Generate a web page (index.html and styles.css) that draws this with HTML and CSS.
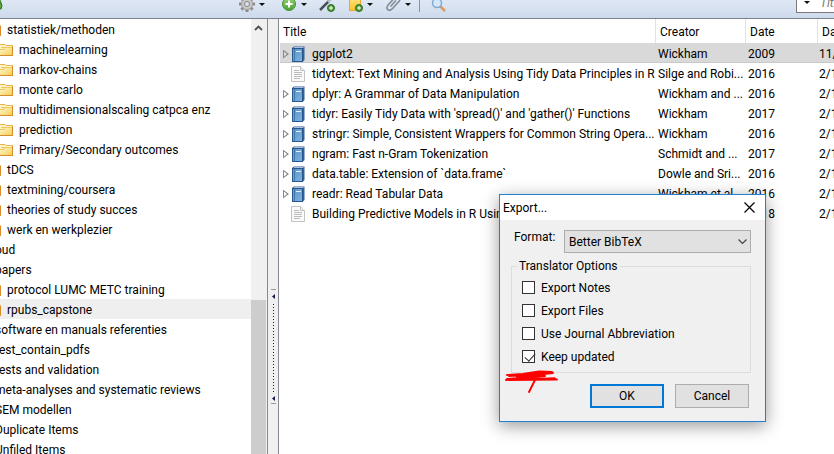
FILE: index.html
```html
<!DOCTYPE html>
<html lang="en">
<head>
<meta charset="utf-8">
<title>Library</title>
<link rel="stylesheet" href="styles.css">
</head>
<body>
<svg class="defs" aria-hidden="true">
  <defs>
    <linearGradient id="gFolder" x1="0" y1="0" x2="1" y2="1"><stop offset="0" stop-color="#fffbe0"/><stop offset="1" stop-color="#f5cd45"/></linearGradient>
    <linearGradient id="gBook" x1="0" y1="0" x2="1" y2="1"><stop offset="0" stop-color="#5f93c6"/><stop offset="1" stop-color="#7db4dd"/></linearGradient>
    <linearGradient id="gGreen" x1="0" y1="0" x2="0" y2="1"><stop offset="0" stop-color="#9ad27e"/><stop offset="1" stop-color="#45a32e"/></linearGradient>
    <linearGradient id="gNote" x1="0" y1="0" x2="0" y2="1"><stop offset="0" stop-color="#ffe680"/><stop offset="1" stop-color="#fbc02f"/></linearGradient>
    <symbol id="folder" viewBox="0 0 16 16">
      <path d="M2.5 13.500V2.500H8l1 1h6.500V13.500Z" fill="#fff6c4" stroke="#e9b050"/>
      <path d="M1.500 13.500V7.500H7l1-2h7.500V13.500Z" fill="url(#gFolder)" stroke="#f0c766"/>
      <path d="M1 13.500H15.500V4" fill="none" stroke="#d98b2b"/>
      <path d="M4 5.500H8M4 7.500H6" stroke="#efc55c"/>
    </symbol>
    <symbol id="book" viewBox="0 0 16 16">
      <path d="M2 2 4 0.500H14.500V14L13 15.500H2Z" fill="#33619b"/>
      <path d="M4 1.500H13.500" stroke="#a9bfdd"/>
      <rect x="2.500" y="2.500" width="10" height="13" fill="url(#gBook)" stroke="#28578f"/>
      <path d="M4.500 3V15" stroke="#3f78b3"/>
      <path d="M6 5.500H11" stroke="#e4f0fa"/>
    </symbol>
    <symbol id="page" viewBox="0 0 16 16">
      <path d="M1.500 .500H10.500L14.500 4.500V15.500H1.500Z" fill="#fafafa" stroke="#c3c3c3"/>
      <path d="M10.500 .500V4.500H14.500" fill="#eee" stroke="#c3c3c3"/>
      <path d="M4 4.500H9M4 6.500H12M4 8.500H12M4 10.500H12M4 12.500H10" stroke="#bcbcbc"/>
    </symbol>
    <symbol id="plus" viewBox="0 0 8 8">
      <circle cx="4" cy="4" r="3.500" fill="#4c9a32" stroke="#2f6d1f"/>
      <path d="M4 2V6M2 4H6" stroke="#fff"/>
    </symbol>
  </defs>
</svg>

<div class="app">
  <header class="toolbar">
    <div class="tools-left">
      <svg class="ico globe" viewBox="0 0 16 16"><circle cx="7" cy="7" r="6" fill="#8cc474" stroke="#3b7d2c"/><path d="M10 7H13Q15 9.500 13 13H10Z" fill="#5aa83c" stroke="#2f6d1f"/></svg>
      <button class="tool" aria-label="Actions">
        <svg class="ico" viewBox="0 0 16 16"><g stroke="#8d8d8d" stroke-width="3"><path d="M8 0V16M0 8H16M2.400 2.400 13.600 13.600M13.600 2.400 2.400 13.600"/></g><circle cx="8" cy="8" r="5.500" fill="#c9c9c9" stroke="#a2a2a2"/><circle cx="8" cy="8" r="2.500" fill="#dce4ee" stroke="#858585"/></svg>
        <span class="caret"></span>
      </button>
    </div>
    <div class="tools-mid">
      <button class="tool" aria-label="New item">
        <svg class="ico" viewBox="0 0 16 16"><circle cx="8" cy="8" r="6.500" fill="url(#gGreen)" stroke="#48933a"/><path d="M8 4.500V11.500M4.500 8H11.500" stroke="#fff" stroke-width="2"/></svg>
        <span class="caret"></span>
      </button>
      <button class="tool" aria-label="Add by identifier">
        <svg class="ico" viewBox="0 0 16 16"><path d="M1 14 10 5" stroke="#4a4f57" stroke-width="2.500"/><path d="M9 6 14 1" stroke="#b9c0c9" stroke-width="2.500"/><use href="#plus" x="8" y="8" width="8" height="8"/></svg>
      </button>
      <button class="tool" aria-label="New note">
        <svg class="ico" viewBox="0 0 16 16"><path d="M2.500 1.500H13.500V14.500H2.500Z" fill="url(#gNote)" stroke="#e7a73a"/><use href="#plus" x="8" y="8" width="8" height="8"/></svg>
        <span class="caret"></span>
      </button>
      <button class="tool" aria-label="Add attachment">
        <svg class="ico" viewBox="0 0 16 16"><path d="M11 4.500 5.500 10.500M14 5.500 8 12Q5 15.500 2.800 13.700Q.800 11.500 3.500 8.500L9.500 2Q12 0 14 2Q15.500 3.500 14 5.500" fill="none" stroke="#858b93" stroke-width="1.600"/></svg>
        <span class="caret"></span>
      </button>
      <span class="divider"></span>
      <button class="tool" aria-label="Advanced search">
        <svg class="ico" viewBox="0 0 16 16"><path d="M10 10 15 15" stroke="#d99a5c" stroke-width="2.500"/><circle cx="7" cy="7" r="4.500" fill="#d3e8fa" stroke="#82a9d6" stroke-width="1.500"/></svg>
      </button>
    </div>
    <label class="search"><span class="caret"></span><input type="text" placeholder="Title, Creator, Year" aria-label="Search"></label>
  </header>

  <div class="panes">
    <nav class="collections">
      <ul class="tree">
        <li class="l1"><svg class="ico"><use href="#folder"/></svg>statistiek/methoden</li>
        <li class="l2"><svg class="ico"><use href="#folder"/></svg>machinelearning</li>
        <li class="l2"><svg class="ico"><use href="#folder"/></svg>markov-chains</li>
        <li class="l2"><svg class="ico"><use href="#folder"/></svg>monte carlo</li>
        <li class="l2"><svg class="ico"><use href="#folder"/></svg>multidimensionalscaling catpca enz</li>
        <li class="l2"><svg class="ico"><use href="#folder"/></svg>prediction</li>
        <li class="l2"><svg class="ico"><use href="#folder"/></svg>Primary/Secondary outcomes</li>
        <li class="l1"><svg class="ico"><use href="#folder"/></svg>tDCS</li>
        <li class="l1"><svg class="ico"><use href="#folder"/></svg>textmining/coursera</li>
        <li class="l1"><svg class="ico"><use href="#folder"/></svg>theories of study succes</li>
        <li class="l1"><svg class="ico"><use href="#folder"/></svg>werk en werkplezier</li>
        <li><svg class="ico"><use href="#folder"/></svg>oud</li>
        <li><svg class="ico"><use href="#folder"/></svg>papers</li>
        <li class="l1"><svg class="ico"><use href="#folder"/></svg>protocol LUMC METC training</li>
        <li class="l1 current"><svg class="ico"><use href="#folder"/></svg>rpubs_capstone</li>
        <li><svg class="ico"><use href="#folder"/></svg>software en manuals referenties</li>
        <li><svg class="ico"><use href="#folder"/></svg>test_contain_pdfs</li>
        <li><svg class="ico"><use href="#folder"/></svg>tests and validation</li>
        <li><svg class="ico"><use href="#folder"/></svg>meta-analyses and systematic reviews</li>
        <li><svg class="ico"><use href="#folder"/></svg>SEM modellen</li>
        <li><svg class="ico"><use href="#folder"/></svg>Duplicate Items</li>
        <li><svg class="ico"><use href="#folder"/></svg>Unfiled Items</li>
      </ul>
      <div class="scrollbar">
        <svg class="up" viewBox="0 0 9 6"><path d="M1 5 4.500 1.500 8 5" fill="none" stroke="#505050" stroke-width="1.800"/></svg>
        <div class="thumb"></div>
      </div>
    </nav>
    <div class="splitter">
      <svg class="grip" viewBox="0 0 5 116"><path d="M0 .500H5M0 114.500H5" stroke="#999"/><path d="M4 5V10L1 7.500ZM4 107V112L1 109.500Z" fill="#1b1b50"/><path d="M2.500 15V104" stroke="#1b1b50" stroke-dasharray="1 2"/></svg>
    </div>
    <main class="items">
      <table>
        <colgroup><col><col class="c-creator"><col class="c-date"><col class="c-added"></colgroup>
        <thead><tr><th>Title</th><th>Creator</th><th>Date</th><th>Date Added</th></tr></thead>
        <tbody>
          <tr class="selected"><td><div class="t"><i class="twisty"></i><svg class="ico"><use href="#book"/></svg>ggplot2</div></td><td>Wickham</td><td>2009</td><td>11/</td></tr>
          <tr><td><div class="t"><i class="twisty none"></i><svg class="ico"><use href="#page"/></svg>tidytext: Text Mining and Analysis Using Tidy Data Principles in R</div></td><td>Silge and Robi...</td><td>2016</td><td>2/1</td></tr>
          <tr><td><div class="t"><i class="twisty"></i><svg class="ico"><use href="#book"/></svg>dplyr: A Grammar of Data Manipulation</div></td><td>Wickham and ...</td><td>2016</td><td>2/1</td></tr>
          <tr><td><div class="t"><i class="twisty"></i><svg class="ico"><use href="#book"/></svg>tidyr: Easily Tidy Data with 'spread()' and 'gather()' Functions</div></td><td>Wickham</td><td>2017</td><td>2/1</td></tr>
          <tr><td><div class="t"><i class="twisty"></i><svg class="ico"><use href="#book"/></svg>stringr: Simple, Consistent Wrappers for Common String Opera...</div></td><td>Wickham</td><td>2016</td><td>2/1</td></tr>
          <tr><td><div class="t"><i class="twisty"></i><svg class="ico"><use href="#book"/></svg>ngram: Fast n-Gram Tokenization</div></td><td>Schmidt and ...</td><td>2017</td><td>2/1</td></tr>
          <tr><td><div class="t"><i class="twisty"></i><svg class="ico"><use href="#book"/></svg>data.table: Extension of `data.frame`</div></td><td>Dowle and Sri...</td><td>2016</td><td>2/1</td></tr>
          <tr><td><div class="t"><i class="twisty"></i><svg class="ico"><use href="#book"/></svg>readr: Read Tabular Data</div></td><td>Wickham et al.</td><td>2016</td><td>2/1</td></tr>
          <tr><td><div class="t"><i class="twisty none"></i><svg class="ico"><use href="#page"/></svg>Building Predictive Models in R Using</div></td><td></td><td>2018</td><td>2/1</td></tr>
        </tbody>
      </table>
    </main>
  </div>
</div>

<form class="dialog" role="dialog" aria-labelledby="dlg-title">
  <div class="titlebar">
    <span id="dlg-title">Export...</span>
    <button type="button" class="close" aria-label="Close"><svg viewBox="0 0 11 11"><path d="M.500 .500 10.500 10.500M10.500 .500 .500 10.500" stroke="#000" stroke-width="1.200"/></svg></button>
  </div>
  <div class="body">
    <div class="format">
      <label for="format">Format:</label>
      <div class="pick">
        <select id="format"><option>Better BibTeX</option></select>
        <svg class="chev" viewBox="0 0 9 6"><path d="M.500 .500 4.500 4.500 8.500 .500" fill="none" stroke="#444" stroke-width="1.200"/></svg>
      </div>
    </div>
    <fieldset>
      <legend>Translator Options</legend>
      <label><input type="checkbox">Export Notes</label>
      <label><input type="checkbox">Export Files</label>
      <label><input type="checkbox">Use Journal Abbreviation</label>
      <label><input type="checkbox" checked>Keep updated</label>
    </fieldset>
    <div class="actions">
      <button type="submit" class="btn primary">OK</button>
      <button type="button" class="btn">Cancel</button>
    </div>
  </div>
  <svg class="scribble" viewBox="0 0 54 24" aria-hidden="true"><path d="M2 5 18 4 34 1.500 47 2 24 4 4 6 48 3 12 7 40 6 14 8 2 9 50 8.500 1 10 52 9.500M30 10 24 22" fill="none" stroke="#fe0000" stroke-width="1.900" stroke-linejoin="round" stroke-linecap="round"/></svg>
</form>
</body>
</html>
```
FILE: styles.css
```css
* { box-sizing: border-box; }

body {
  margin: 0;
  overflow: hidden;
  background: #fff;
  color: #000;
  font: 12px/20px "Segoe UI", Roboto, sans-serif;
}

button, input, select { font: inherit; color: inherit; }

.defs { position: absolute; width: 0; height: 0; }
.ico { width: 16px; height: 16px; flex: none; }

.app { display: flex; flex-direction: column; height: 100vh; }

/* Toolbar */
.toolbar {
  display: flex;
  height: 19px;
  flex: none;
  align-items: flex-end;
  overflow: hidden;
  padding-bottom: 5px;
  background: linear-gradient(#dfe8f4, #cddaec);
  border-bottom: 1px solid #7a818c;
}
.tools-left { display: flex; justify-content: space-between; width: 271px; margin: 0 4px 1px 0; }
.globe { margin-left: -12px; }
.tool { display: flex; align-items: center; gap: 4px; padding: 0 6px; border: 0; background: none; }
.tools-mid { display: flex; flex: 1; margin-bottom: 1px; }
.caret { border: 3px solid transparent; border-top-color: #111; border-bottom: 0; }
.divider { width: 1px; height: 16px; margin: 0 4px 0 2px; background: #8a93a1; }
.search {
  display: flex;
  align-items: center;
  width: 38px;
  height: 21px;
  padding-left: 7px;
  gap: 10px;
  background: #fff;
  border: 1px solid #7a7a7a;
  border-right: 0;
}
.search input { width: 100%; min-width: 0; padding: 0; border: 0; outline: 0; background: none; }
.search input::placeholder { color: #777; font-style: italic; opacity: 1; }

/* Panes */
.panes { display: flex; flex: 1; min-height: 0; }
.collections { display: flex; width: 267px; flex: none; overflow: hidden; }
.tree { flex: 1; margin: 0 0 0 -27px; padding: 0; list-style: none; white-space: nowrap; }
.tree li { display: flex; align-items: center; gap: 6px; height: 20px; padding-top: 1px; }
.tree .l1 { padding-left: 12px; }
.tree .l2 { padding-left: 24px; }
.tree .current { background: #efefef; }

.scrollbar { display: flex; flex-direction: column; align-items: center; width: 16px; padding-right: 1px; background: #f0f0f0; }
.up { width: 9px; height: 6px; margin: 6px 0; flex: none; }
.thumb { width: 100%; margin-top: 263px; flex: 1; background: #cdcdcd; }

.splitter {
  display: flex;
  align-items: flex-start;
  justify-content: center;
  width: 12px;
  flex: none;
  padding-top: 270px;
  background: #f0f0f0;
  border: solid #858a93;
  border-width: 0 1px;
}
.grip { width: 5px; height: 116px; }

/* Item list */
.items { flex: 1; min-width: 0; padding-left: 1px; }
table { width: 100%; table-layout: fixed; border-collapse: separate; border-spacing: 0; }
.c-creator { width: 90px; }
.c-date { width: 72px; }
.c-added { width: 17px; }
th, td { padding: 0; overflow: hidden; white-space: nowrap; text-align: left; font-weight: 400; }
th { height: 24px; padding: 2px 0 0 4px; border-left: 1px solid #e2e2e2; }
th:first-child { padding-left: 3px; border-left: 0; }
td { height: 20px; padding: 2px 0 0 3px; line-height: 18px; }
td:last-child { padding-left: 2px; }
.selected td { background: #d9d9d9; box-shadow: inset 0 -1px #c9c9c9; }
.t { display: flex; align-items: center; height: 18px; }
.t .ico { margin: 0 6px 0 1px; }
.twisty { width: 6px; height: 9px; flex: none; background: #8a8a8a; clip-path: polygon(0 0, 100% 50%, 0 100%, 0 0, 1px 2px, 1px 7px, 4px 50%, 1px 2px); }
.twisty.none { visibility: hidden; }

/* Export dialog */
.dialog {
  position: absolute;
  top: 194px;
  left: 499px;
  width: 267px;
  background: #f0f0f0;
  border: 1px solid #1f7fd0;
  box-shadow: 0 4px 16px rgba(0, 0, 0, .4);
}
.titlebar { display: flex; align-items: center; justify-content: space-between; height: 25px; padding: 0 10px 0 3px; background: #fff; }
.close { display: flex; padding: 0; border: 0; background: none; }
.close svg { width: 11px; height: 11px; }
.body { padding: 10px 14px 13px 11px; }
.format { display: flex; justify-content: space-between; padding-left: 3px; line-height: 14px; }
.pick { position: relative; width: 187px; }
select { display: block; width: 100%; height: 23px; padding: 0 4px; appearance: none; background: #e1e1e1; border: 1px solid #adadad; border-radius: 0; }
.chev { position: absolute; top: 9px; right: 4px; width: 9px; height: 6px; pointer-events: none; }
fieldset { display: flex; flex-direction: column; min-width: 0; margin: 3px 0 0; padding: 0 10px 4px; border: 1px solid #dcdcdc; }
legend { margin-left: -5px; padding: 0 2px; line-height: 20px; }
fieldset label { display: flex; align-items: center; gap: 6px; height: 23px; }
fieldset input { width: 13px; height: 13px; margin: 0; appearance: none; background: #fff; border: 1px solid #333; }
fieldset input:checked::after { content: ""; display: block; width: 5px; height: 9px; margin: 0 0 0 4px; border: solid #333; border-width: 0 1px 1px 0; transform: rotate(42deg); }
.actions { display: flex; justify-content: flex-end; gap: 11px; margin-top: 11px; padding-right: 2px; }
.btn { width: 74px; height: 24px; padding: 0; line-height: 20px; background: #e1e1e1; border: 1px solid #adadad; }
.btn.primary { border: 2px solid #0078d7; }
.scribble { position: absolute; top: 175px; left: 5px; width: 54px; height: 24px; }
```
